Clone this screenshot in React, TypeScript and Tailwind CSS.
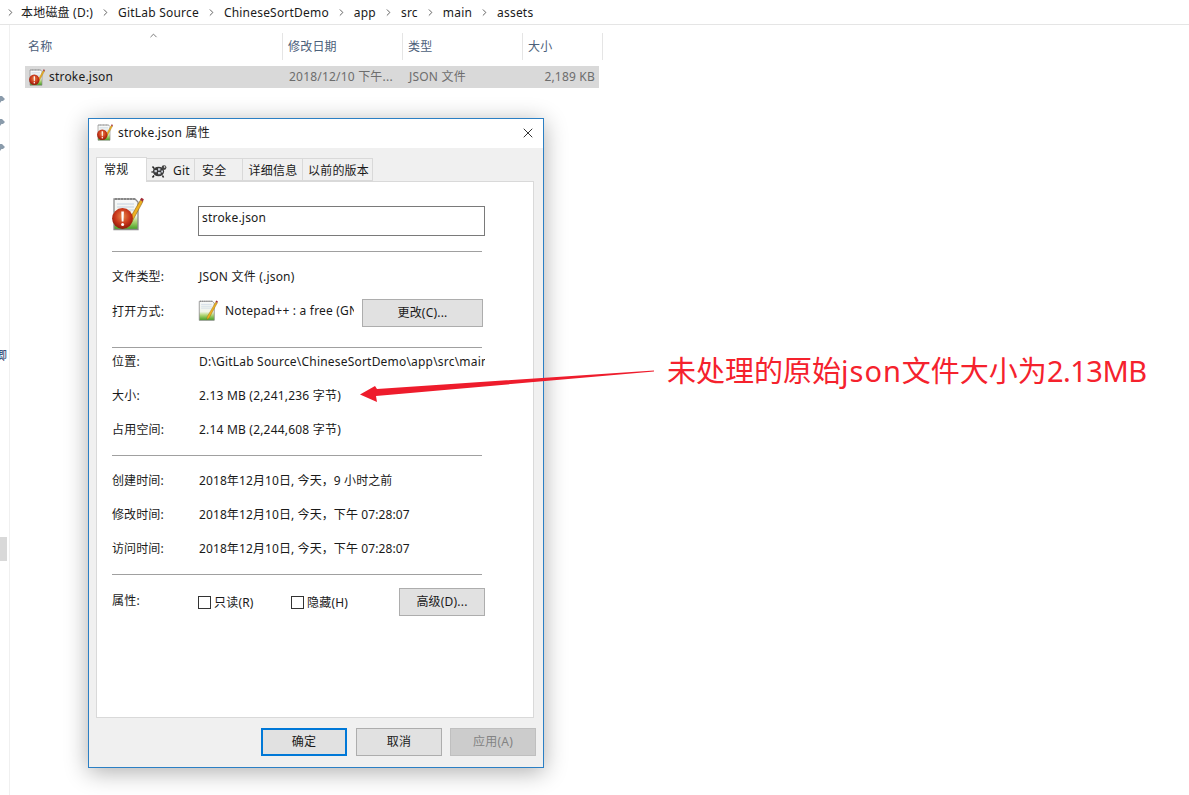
import { ChevronRight, ChevronUp, X } from "lucide-react";
import type { ReactNode } from "react";

const FONT = "font-['Noto_Sans','Noto_Sans_CJK_SC',sans-serif]";

function NotepadIcon({ size, badge = true }: { size: number; badge?: boolean }) {
  return (
    <svg width={size} height={(size * 34) / 32} viewBox="0 0 32 34" className="shrink-0">
      <defs>
        <radialGradient id="ball" cx="0.5" cy="0.4" r="0.6">
          <stop offset="0" stopColor="#e8894a" />
          <stop offset="0.6" stopColor="#c8361a" />
          <stop offset="1" stopColor="#8d1a0c" />
        </radialGradient>
        <linearGradient id="sheet" x1="0" y1="0" x2="0" y2="1">
          <stop offset="0" stopColor="#f8f9fa" />
          <stop offset="0.55" stopColor="#f0f4ea" />
          <stop offset="0.72" stopColor="#b5d77a" />
          <stop offset="1" stopColor="#3f9e1e" />
        </linearGradient>
      </defs>
      <path d="M2 2h21l3 3v27.5H2z" fill="url(#sheet)" stroke="#8a8a8a" strokeWidth="1.3" />
      <path d="M4 1v2M7 1v2M10 1v2M13 1v2M16 1v2M19 1v2M22 1v2" stroke="#666" strokeWidth="1" />
      <path d="M5 7h17M5 10h17M5 13h17" stroke="#c3d0e0" strokeWidth="1" />
      <path d="M28.5 3l2.4 1.6-13 24-3.6 2.6.4-4.4z" fill="#eeb021" stroke="#8a6212" strokeWidth="0.6" />
      <path d="M28 2.5l1.6-1.8 2.2 1.5-1 2.6z" fill="#a12b36" />
      {badge && (
        <>
          <circle cx="10.5" cy="21.5" r="10.4" fill="url(#ball)" />
          <path d="M9.3 14.5h2.6l-.4 10h-1.8z" fill="#fff" />
          <circle cx="10.6" cy="27.5" r="1.5" fill="#fff" />
        </>
      )}
    </svg>
  );
}

function TortoiseIcon() {
  return (
    <svg width="16" height="16" viewBox="0 0 16 16" className="shrink-0">
      <ellipse cx="7.5" cy="8.5" rx="5.6" ry="4.8" fill="#3a3a3a" />
      <path d="M3.5 7h2.4v2.2H3.5zM7 5.2h2.4v2.2H7zM7 9h2.6v2.2H7zM10.2 7.6h1.8v1.8h-1.8z" fill="#c9ced6" />
      <circle cx="13" cy="4.6" r="2.4" fill="#444" />
      <circle cx="13.6" cy="4" r="0.8" fill="#fff" />
      <path d="M3 12.5l-1.5 2M11.5 12.5l1 2M3.2 5.5L1.5 3.5M1.8 9H0.5" stroke="#222" strokeWidth="1.5" />
    </svg>
  );
}

function Divider({ className }: { className: string }) {
  return <div className={`h-px w-[370px] bg-[#a0a0a0] ${className}`} />;
}

function PropRow({ label, className, children }: { label: string; className: string; children: ReactNode }) {
  return (
    <div className={`flex h-6 items-center ${className}`}>
      <span className="w-[87px] shrink-0">{label}</span>
      <span className="whitespace-nowrap">{children}</span>
    </div>
  );
}

function DlgButton({ children, className }: { children: ReactNode; className: string }) {
  return (
    <button className={`flex h-7 shrink-0 items-center justify-center text-xs ${className}`}>
      {children}
    </button>
  );
}

function Check({ label, className }: { label: string; className: string }) {
  return (
    <span className={`flex items-center ${className}`}>
      <span className="h-[13px] w-[13px] border border-[#333] bg-white" />
      <span className="ml-[3px] mt-[1px]">{label}</span>
    </span>
  );
}

function Tab({ className, children }: { className: string; children: ReactNode }) {
  return (
    <div className={`mt-[2px] flex h-[23px] items-center justify-center border-y border-r border-[#d9d9d9] bg-[#f0f0f0] pt-[2px] ${className}`}>
      {children}
    </div>
  );
}

function PropertiesDialog() {
  return (
    <div className="absolute left-[88px] top-[118px] flex h-[650px] w-[456px] flex-col border border-[#2b7fc4] bg-[#f0f0f0] text-xs text-[#1a1a1a] shadow-[0_4px_22px_rgba(0,0,0,0.32)]">
      <div className="flex h-[29px] shrink-0 items-center bg-white pb-[2px] pl-2 pr-[7px]">
        <NotepadIcon size={16} />
        <span className="ml-[5px] flex-1">stroke.json 属性</span>
        <X size={16} strokeWidth={1.2} className="text-black" />
      </div>

      <div className="flex h-[33px] shrink-0 items-end pl-[7px]">
        <div className="relative z-10 -mb-px flex h-[25px] w-[51px] items-center border-x border-t border-[#d9d9d9] bg-white pl-[7px]">常规</div>
        <div className="flex h-[25px] items-start">
          <Tab className="w-[48px] gap-[6px]"><TortoiseIcon />Git</Tab>
          <Tab className="w-[48px] justify-start pl-[7px]"><span>安全</span></Tab>
          <Tab className="w-[60px] pl-px">详细信息</Tab>
          <Tab className="w-[70px] pl-[2px]">以前的版本</Tab>
        </div>
      </div>

      <div className="ml-[7px] h-[537px] w-[438px] shrink-0 border border-[#d9d9d9] bg-white pl-[15px] pt-[15px]">
        <div className="flex h-[39px]">
          <div className="w-[86px] shrink-0"><NotepadIcon size={32} /></div>
          <div className="mt-[9px] flex h-[30px] w-[287px] items-start border border-[#7a7a7a] px-[3px] pt-[3px]">stroke.json</div>
        </div>
        <Divider className="mt-[15px]" />
        <PropRow label="文件类型:" className="mt-[13px]">JSON 文件 (.json)</PropRow>
        <div className="mt-[10px] flex h-7">
          <span className="flex h-6 w-[86px] shrink-0 items-center pt-px">打开方式:</span>
          <div className="flex h-6 w-[164px] shrink-0 items-center">
            <NotepadIcon size={20} badge={false} />
            <span className="ml-[7px] w-[129px] overflow-hidden whitespace-nowrap">Notepad++ : a free (GNU)</span>
          </div>
          <DlgButton className="w-[121px] border border-[#adadad] bg-[#e1e1e1]">更改(C)...</DlgButton>
        </div>
        <Divider className="mt-[20px]" />
        <PropRow label="位置:" className="mt-[2px] w-[373px] overflow-hidden">D:\GitLab Source\ChineseSortDemo\app\src\main\assets</PropRow>
        <PropRow label="大小:" className="mt-[10px]">2.13 MB (2,241,236 字节)</PropRow>
        <PropRow label="占用空间:" className="mt-[10px]">2.14 MB (2,244,608 字节)</PropRow>
        <Divider className="mt-[13px]" />
        <PropRow label="创建时间:" className="mt-[13px] tracking-[0.1px]">2018年12月10日, 今天，9 小时之前</PropRow>
        <PropRow label="修改时间:" className="mt-[10px] tracking-[0.1px]">2018年12月10日, 今天，下午 07:28:07</PropRow>
        <PropRow label="访问时间:" className="mt-[10px] tracking-[0.1px]">2018年12月10日, 今天，下午 07:28:07</PropRow>
        <Divider className="mt-[13px]" />
        <div className="mt-[13px] flex h-7">
          <span className="mt-[5px] h-5 w-[86px] shrink-0">属性:</span>
          <div className="flex h-7 w-[201px] shrink-0 items-center">
            <Check label="只读(R)" className="w-[93px]" />
            <Check label="隐藏(H)" className="" />
          </div>
          <DlgButton className="w-[86px] border border-[#adadad] bg-[#e1e1e1]">高级(D)...</DlgButton>
        </div>
      </div>

      <div className="mt-[10px] flex justify-end gap-[8px] pr-[7px]">
        <DlgButton className="mr-px w-[86px] border-2 border-[#0078d7] bg-[#e1e1e1]">确定</DlgButton>
        <DlgButton className="w-[86px] border border-[#adadad] bg-[#e1e1e1]">取消</DlgButton>
        <DlgButton className="w-[86px] border border-[#bfbfbf] bg-[#cccccc] text-[#838383]">应用(A)</DlgButton>
      </div>
    </div>
  );
}

function SidePin({ className }: { className: string }) {
  return (
    <svg width="5" height="10" viewBox="0 0 5 10" className={`shrink-0 ${className}`}>
      <path d="M0 1h2l3 3-2 2H1.5L0 8z" fill="#8a9bab" />
    </svg>
  );
}

const CRUMBS = ["GitLab Source", "ChineseSortDemo", "app", "src", "main", "assets"];

export default function App() {
  return (
    <div className={`relative flex h-[795px] w-[1189px] flex-col overflow-hidden bg-white text-xs tracking-[0.2px] ${FONT}`}>
      <div className="flex h-[25px] shrink-0 items-center border-b border-[#e5e5e5] pl-[5px] pt-px text-[#1a1a1a]">
        <ChevronRight size={11} className="text-[#555]" />
        <span className="ml-[5px]">本地磁盘 (D:)</span>
        {CRUMBS.map((c) => (
          <span key={c} className="flex items-center">
            <ChevronRight size={11} className="mx-[7px] text-[#555]" />
            {c}
          </span>
        ))}
      </div>

      <div className="flex flex-1">
        <div className="flex w-[10px] shrink-0 flex-col overflow-hidden border-r border-[#f0f0f0]">
          <SidePin className="mt-[70px]" />
          <SidePin className="mt-[13px]" />
          <SidePin className="mt-[15px]" />
          <span className="-ml-[5px] mt-[195px] text-xs leading-4 text-[#1a3a6a]">卿</span>
          <div className="mt-[173px] h-6 w-[7px] shrink-0 bg-[#d9d9d9]" />
        </div>

        <div className="pl-[15px] pt-2">
          <div className="grid h-[27px] grid-cols-[258px_120px_120px_80px] text-[#4c607a]">
            <div className="relative border-r border-[#e5e5e5] pl-[3px] pt-[6px]">
              名称
              <ChevronUp size={11} className="absolute left-[123px] top-[-3px] text-[#6d6d6d]" />
            </div>
            <div className="border-r border-[#e5e5e5] pl-[5px] pt-[6px]">修改日期</div>
            <div className="border-r border-[#e5e5e5] pl-[5px] pt-[6px]">类型</div>
            <div className="border-r border-[#e5e5e5] pl-[5px] pt-[6px]">大小</div>
          </div>
          <div className="mt-[6px] grid h-[22px] w-[574px] grid-cols-[258px_120px_120px_76px] items-center bg-[#d9d9d9] text-[#6d6d6d]">
            <div className="flex items-center pl-[4px] text-[#1a1a1a]">
              <NotepadIcon size={16} />
              <span className="ml-1">stroke.json</span>
            </div>
            <div className="pl-[6px]">2018/12/10 下午...</div>
            <div className="pl-[6px]">JSON 文件</div>
            <div className="pr-1 text-right">2,189 KB</div>
          </div>
        </div>
      </div>

      <PropertiesDialog />

      <svg width="310" height="40" viewBox="0 0 310 40" className="absolute left-[350px] top-[365px]">
        <path d="M304 5.5L27 24l-2-3L10 29.5 27 37l-1-6L304 6.5z" fill="#ee1c2c" />
      </svg>

      <span className="absolute left-[667px] top-[351px] whitespace-nowrap text-[29px] leading-10 tracking-normal text-[#f5222d]">
        未处理的原始<span className="tracking-[1px]">json</span>文件大小为<span className="tracking-[-0.5px]">2.13MB</span>
      </span>
    </div>
  );
}
